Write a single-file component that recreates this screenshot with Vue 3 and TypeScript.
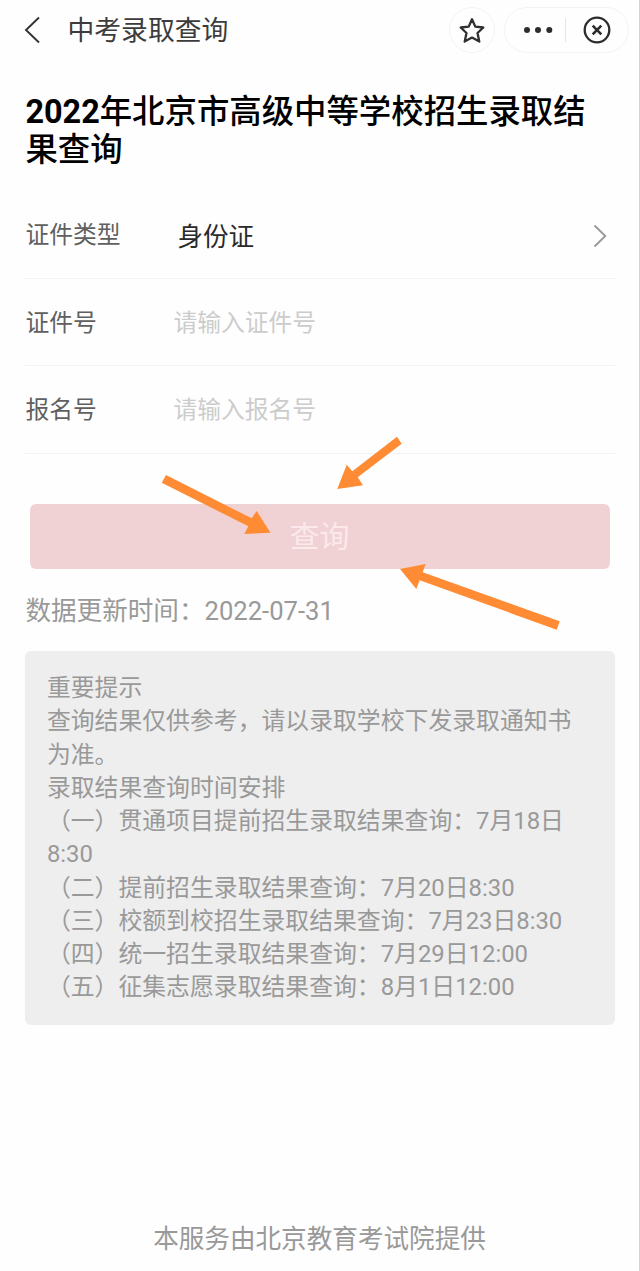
<script setup lang="ts">
import { ref } from 'vue'

interface Field {
  id: string
  label: string
  placeholder: string
}

const fields: Field[] = [
  { id: 'cert', label: '证件号', placeholder: '请输入证件号' },
  { id: 'apply', label: '报名号', placeholder: '请输入报名号' },
]
const values = ref<Record<string, string>>({ cert: '', apply: '' })

const notices: string[] = [
  '重要提示',
  '查询结果仅供参考，请以录取学校下发录取通知书为准。',
  '录取结果查询时间安排',
  '（一）贯通项目提前招生录取结果查询：7月18日8:30',
  '（二）提前招生录取结果查询：7月20日8:30',
  '（三）校额到校招生录取结果查询：7月23日8:30',
  '（四）统一招生录取结果查询：7月29日12:00',
  '（五）征集志愿录取结果查询：8月1日12:00',
]

const arrows: string[] = [
  '166,475 251.7,518.3 256.7,511 270.5,532.7 244.3,534 248.3,526.3 161.7,482.7',
  '397,436.7 401.7,443.7 357.7,477.3 363,485.3 337.3,489 346.7,464.7 352.3,471.3',
  '400,569 425.7,564 422.7,572.3 559.7,621.3 556.7,629.7 419.7,580.3 416.3,589',
]
</script>

<template>
  <div class="page" lang="zh-CN">
    <header class="bar">
      <svg class="back" width="16" height="28" viewBox="0 0 16 28">
        <path d="M15 1.5 L2 14 L15 26.5" />
      </svg>
      <span class="bar-title">中考录取查询</span>
      <div class="star">
        <svg width="26" height="27" viewBox="0 0 26 27">
          <path d="M13 2.2 L16.3 9.6 L24.3 10.5 L18.5 16 L20.3 24.6 L13 20.6 L5.7 24.6 L7.5 16 L1.7 10.5 L9.7 9.6 Z" />
        </svg>
      </div>
      <div class="capsule">
        <svg class="dots" width="30" height="8" viewBox="0 0 30 8">
          <circle cx="4" cy="4" r="3" />
          <circle cx="15" cy="4" r="3" />
          <circle cx="26.3" cy="4" r="3" />
        </svg>
        <i class="split"></i>
        <svg class="close" width="28" height="28" viewBox="0 0 28 28">
          <circle cx="14" cy="14" r="12.3" />
          <path d="M9.7 9.7 L18.3 18.3 M18.3 9.7 L9.7 18.3" />
        </svg>
      </div>
    </header>

    <main class="content">
      <h1><b>2022</b><span>年北京市高级中等学校招生录取结</span><br /><span>果查询</span></h1>

      <div class="row">
        <span class="label">证件类型</span>
        <span class="value">身份证</span>
        <svg class="chevron" width="14" height="24" viewBox="0 0 14 24">
          <path d="M1.5 1.5 L12.3 12 L1.5 22.5" />
        </svg>
      </div>
      <div v-for="f in fields" :key="f.id" class="row">
        <label class="label" :for="f.id">{{ f.label }}</label>
        <input :id="f.id" v-model="values[f.id]" :placeholder="f.placeholder" />
      </div>

      <button class="submit" type="button">查询</button>
      <p class="updated">数据更新时间：2022-07-31</p>

      <section class="notice">
        <p v-for="line in notices" :key="line">{{ line }}</p>
      </section>
    </main>

    <footer>本服务由北京教育考试院提供</footer>

    <svg class="arrows" width="640" height="1271" viewBox="0 0 640 1271">
      <polygon v-for="a in arrows" :key="a" :points="a" />
    </svg>
  </div>
</template>

<style>
body {
  margin: 0;
  background: #fefefe;
}
</style>

<style scoped>
.page {
  position: relative;
  box-sizing: border-box;
  width: 640px;
  height: 1271px;
  overflow: hidden;
  display: flex;
  flex-direction: column;
  background: #fefefe;
  border-right: 1px solid #d4d4d4;
  font-family: Roboto, "Noto Sans CJK SC", sans-serif;
  color: #3c3c3c;
}
svg {
  display: block;
  flex: none;
  fill: none;
}
.bar {
  display: flex;
  align-items: center;
  height: 60px;
  padding-left: 24px;
}
.back path {
  stroke: #333;
  stroke-width: 1.9;
}
.bar-title {
  margin-left: 27.5px;
  width: 381.5px;
  padding-top: 2px;
  font-size: 26.8px;
  line-height: 40px;
}
.star,
.capsule {
  box-sizing: border-box;
  display: flex;
  align-items: center;
  height: 46px;
  border: 1px solid #f3f3f3;
  border-radius: 23px;
  flex: none;
}
.star {
  width: 46px;
  justify-content: center;
}
.star path {
  stroke: #303030;
  stroke-width: 2.3;
  stroke-linejoin: round;
}
.capsule {
  width: 125px;
  margin-left: 8.5px;
  padding-left: 18.5px;
}
.dots {
  fill: #2c2c2c;
}
.split {
  width: 1px;
  height: 24px;
  margin: 0 17px 0 12px;
  background: #e6e6e6;
}
.close {
  margin-top: -1px;
  stroke: #2c2c2c;
  stroke-width: 2.3;
}
.close path {
  stroke-width: 2.6;
}
.content {
  padding: 32.5px 24.5px 0 25.4px;
}
h1 {
  margin: 0 -1px 22.5px 0;
  font-size: 32.4px;
  line-height: 38px;
  font-weight: 500;
  color: #000;
  white-space: nowrap;
}
h1 b {
  font-weight: 700;
}
.row {
  box-sizing: border-box;
  display: flex;
  align-items: center;
  height: 87.6px;
  border-bottom: 1.5px solid #f2f2f2;
}
.label {
  width: 148px;
  padding-bottom: 3px;
  font-size: 23.8px;
  color: #606060;
}
.value {
  flex: 1;
  padding: 1px 0 0 4px;
  font-size: 25.6px;
  color: #2a2a2a;
}
.chevron {
  margin: 3px 8px 0 0;
}
.chevron path {
  stroke: #999;
  stroke-width: 1.9;
}
input {
  flex: 1;
  min-width: 0;
  padding: 2px 0 0;
  border: 0;
  outline: 0;
  background: transparent;
  font: inherit;
  font-size: 23.8px;
  color: #222;
}
input::placeholder {
  color: #ccc;
}
.submit {
  display: block;
  width: 580px;
  height: 65px;
  margin: 50px 0 0 4.6px;
  padding: 0 1px 4px 0;
  border: 0;
  border-radius: 6px;
  background: #f0d1d4;
  color: #fbe9eb;
  font: inherit;
  font-size: 30px;
}
p {
  margin: 0;
}
.updated {
  margin: 22px 0 20px;
  font-size: 25.6px;
  line-height: 40px;
  color: #999;
}
.notice {
  padding: 21.5px 21.5px 20.5px;
  border-radius: 6px;
  background: #eee;
  font-size: 23.85px;
  line-height: 33.2px;
  color: #999;
}
footer {
  margin-top: auto;
  padding-bottom: 12px;
  text-align: center;
  font-size: 25.6px;
  line-height: 40px;
  color: #999;
}
.arrows {
  position: absolute;
  left: 0;
  top: 0;
  pointer-events: none;
}
.arrows polygon {
  fill: #ff8c35;
}
</style>
